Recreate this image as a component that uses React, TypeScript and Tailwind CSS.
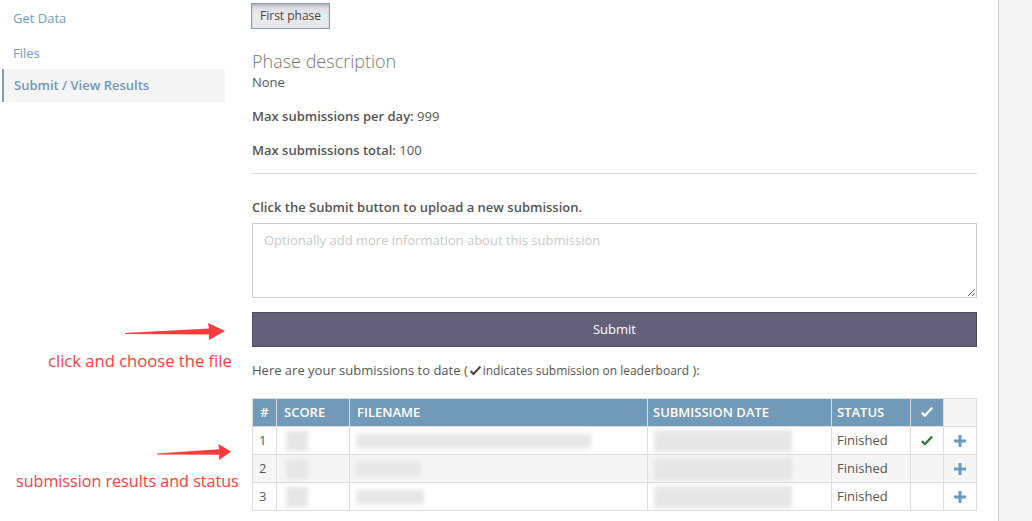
import React from 'react';

const font = { fontFamily: '"Open Sans", "Noto Sans", sans-serif' };

function Arrow({ className }: { className: string }) {
  // long thin red arrow, pointing right
  return (
    <svg className={className} viewBox="0 0 100 18" preserveAspectRatio="none">
      <polygon points="0,10 84,5.5 83,0 100,8 84,17 84,11.5 0,11" fill="#ff3b3b" />
    </svg>
  );
}

function Blur({ className }: { className: string }) {
  return <div className={`bg-[#e6e6e6] blur-[2px] ${className}`} />;
}

function Check({ className }: { className: string }) {
  return (
    <svg className={className} viewBox="0 0 16 14">
      <path d="M1 8 L5.5 12.5 L15 2.5 L13 0.8 L5.5 8.7 L3 6.2 Z" fill="currentColor" />
    </svg>
  );
}

function Plus() {
  return (
    <svg className="w-[12px] h-[12px]" viewBox="0 0 12 12">
      <path d="M4.5 0 H7.5 V4.5 H12 V7.5 H7.5 V12 H4.5 V7.5 H0 V4.5 H4.5 Z" fill="#6f9ac0" />
    </svg>
  );
}

const rows = [
  { n: 1, fw: 'w-[235px]', onBoard: true, bg: 'bg-white' },
  { n: 2, fw: 'w-[65px]', onBoard: false, bg: 'bg-[#f5f5f5]' },
  { n: 3, fw: 'w-[68px]', onBoard: false, bg: 'bg-white' },
];

export default function App() {
  return (
    <div className="relative flex w-[1032px] h-[521px] overflow-hidden bg-white text-[#555]" style={font}>
      {/* sidebar */}
      <div className="w-[225px] shrink-0 flex flex-col text-[13px] text-[#6f9bc0]">
        <div className="h-[38px] flex items-center pl-[13px]">Get Data</div>
        <div className="h-[31px] flex items-center pl-[13px]">Files</div>
        <div className="h-[33px] flex items-center pl-[10px] pt-[1px] ml-[2px] border-l-2 border-[#7d9fbd] bg-[#f5f5f5] font-semibold text-[#7396b8]">
          Submit / View Results
        </div>
      </div>

      {/* main */}
      <div className="ml-[27px] w-[725px] shrink-0 flex flex-col">
        <div className="pt-[2px]">
          <button className="h-[26px] px-[8px] ml-[-1px] text-[12px] text-[#444] border border-[#7d9fbd] bg-gradient-to-b from-[#d6d6de] via-[#ecebf0] to-[#e6e5ea] shadow-[inset_0_2px_2px_rgba(0,0,0,0.15)]">
            First phase
          </button>
        </div>
        <div className="mt-[20px] h-[24px] flex items-center text-[18px] font-light text-[#777]">Phase description</div>
        <div className="h-[20px] flex items-center text-[13px] text-[#555]">None</div>
        <div className="mt-[14px] h-[20px] flex items-center text-[13px]">
          <span className="font-semibold">Max submissions per day:</span>&nbsp;999
        </div>
        <div className="mt-[14px] h-[20px] flex items-center text-[13px]">
          <span className="font-semibold">Max submissions total:</span>&nbsp;100
        </div>
        <div className="mt-[12px] border-t border-[#ddd]" />
        <div className="mt-[24px] h-[20px] flex items-center text-[13px] font-semibold">
          Click the Submit button to upload a new submission.
        </div>
        <textarea
          className="mt-[5px] h-[75px] w-full border border-[#ccc] px-[11px] py-[7px] text-[13px] placeholder-[#c8c8c8] outline-none"
          placeholder="Optionally add more information about this submission"
        />
        <button className="mt-[14px] h-[35px] w-full bg-[#645f7a] border border-[#4e4a60] text-white text-[13px]">
          Submit
        </button>
        <div className="mt-[14px] h-[20px] flex items-center text-[13px]">
          Here are your submissions to date (
          <Check className="w-[13px] h-[12px] text-[#444] mx-[1px]" />
          <span className="text-[12px]">indicates submission on leaderboard</span>&nbsp;):
        </div>

        <table className="mt-[17px] w-[725px] border-collapse text-[13px] table-fixed">
          <thead>
            <tr className="h-[28px] bg-[#7199b8] text-white font-semibold text-left">
              <th className="w-[24px] border border-[#ddd] text-center font-semibold">#</th>
              <th className="w-[73px] border border-[#ddd] px-[7px] font-semibold">SCORE</th>
              <th className="w-[298px] border border-[#ddd] px-[7px] font-semibold">FILENAME</th>
              <th className="w-[184px] border border-[#ddd] px-[5px] font-semibold">SUBMISSION DATE</th>
              <th className="w-[79px] border border-[#ddd] px-[5px] font-semibold">STATUS</th>
              <th className="w-[33px] border border-[#ddd] font-semibold">
                <div className="flex justify-center">
                  <Check className="w-[14px] h-[13px] text-white" />
                </div>
              </th>
              <th className="border border-[#ddd] bg-[#f5f5f5]" />
            </tr>
          </thead>
          <tbody>
            {rows.map((r) => (
              <tr key={r.n} className={`h-[28px] ${r.bg}`}>
                <td className="border border-[#ddd] px-[6px] text-[#555]">{r.n}</td>
                <td className="border border-[#ddd] px-[9px]">
                  <Blur className="w-[22px] h-[20px]" />
                </td>
                <td className="border border-[#ddd] px-[6px]">
                  <Blur className={`${r.fw} h-[14px]`} />
                </td>
                <td className="border border-[#ddd] px-[6px]">
                  <Blur className="w-[138px] h-[22px]" />
                </td>
                <td className="border border-[#ddd] px-[5px] text-[#555]">Finished</td>
                <td className="border border-[#ddd]">
                  {r.onBoard && (
                    <div className="flex justify-center">
                      <Check className="w-[14px] h-[12px] text-[#2f7a2f]" />
                    </div>
                  )}
                </td>
                <td className="border border-[#ddd]">
                  <div className="flex justify-center">
                    <Plus />
                  </div>
                </td>
              </tr>
            ))}
          </tbody>
        </table>
      </div>

      {/* right gutter */}
      <div className="ml-[21px] flex-1 border-l border-[#ccc] bg-[#f5f5f5]" />

      {/* annotations */}
      <Arrow className="absolute left-[125px] top-[323px] w-[100px] h-[18px]" />
      <div className="absolute left-[48px] top-[349px] text-[16.6px] text-[#ff3b3b] leading-[24px]">click and choose the file</div>
      <Arrow className="absolute left-[157px] top-[444px] w-[74px] h-[17px]" />
      <div className="absolute left-[16px] top-[469px] text-[16.1px] text-[#ff3b3b] leading-[24px]">submission results and status</div>
    </div>
  );
}
